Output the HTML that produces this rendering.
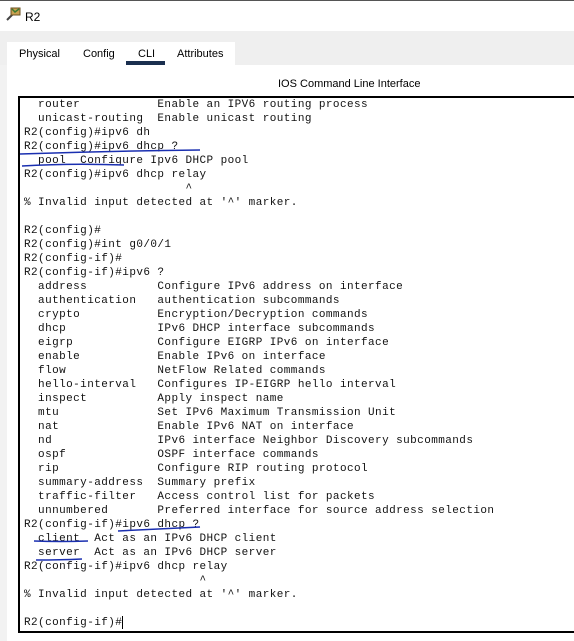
<!DOCTYPE html>
<html><head><style>
body{margin:0;width:574px;height:641px;overflow:hidden;background:#fff;font-family:"Liberation Sans",Arial,sans-serif;position:relative}
.abs{position:absolute}
pre{margin:0;font-family:"Liberation Mono","Courier New",monospace;font-size:11px;line-height:14px;color:#111;letter-spacing:0.42px}
</style></head><body>
<div class="abs" style="left:0;top:0;width:574px;height:1px;background:#555"></div>
<svg class="abs" style="left:4px;top:6px" width="18" height="18" viewBox="0 0 18 18">
<path d="M3 14 L9 8" stroke="#444" stroke-width="2"/>
<rect x="7" y="2" width="9" height="7" fill="#c8a050" stroke="#6a5020" stroke-width="1"/>
<path d="M8 3 L11 6 L15 3" stroke="#3a7a30" stroke-width="1.5" fill="none"/>
</svg>
<div class="abs" style="left:25px;top:10px;font-size:12px;color:#000">R2</div>
<div class="abs" style="left:0;top:31px;width:574px;height:34px;background:#efefef"></div>
<div class="abs" style="left:0;top:65px;width:7px;height:576px;background:#f2f2f2"></div>
<div class="abs" style="left:7px;top:42px;width:228px;height:24px;background:#fff"></div>
<div class="abs" style="left:19px;top:48px;font-size:11px">Physical</div>
<div class="abs" style="left:83px;top:48px;font-size:11px">Config</div>
<div class="abs" style="left:138px;top:48px;font-size:11px">CLI</div>
<div class="abs" style="left:177px;top:48px;font-size:11px">Attributes</div>
<div class="abs" style="left:126px;top:61px;width:39px;height:4px;background:#1a2f4f"></div>
<div class="abs" style="left:278px;top:78px;font-size:11px">IOS Command Line Interface</div>
<div class="abs" style="left:18px;top:96px;height:537px;border:2px solid #000;border-right:none;box-sizing:border-box;width:560px"></div>
<pre class="abs" style="left:24px;top:98px">  router           Enable an IPV6 routing process
  unicast-routing  Enable unicast routing
R2(config)#ipv6 dh
R2(config)#ipv6 dhcp ?
  pool  Configure Ipv6 DHCP pool
R2(config)#ipv6 dhcp relay
                       ^
% Invalid input detected at '^' marker.

R2(config)#
R2(config)#int g0/0/1
R2(config-if)#
R2(config-if)#ipv6 ?
  address          Configure IPv6 address on interface
  authentication   authentication subcommands
  crypto           Encryption/Decryption commands
  dhcp             IPv6 DHCP interface subcommands
  eigrp            Configure EIGRP IPv6 on interface
  enable           Enable IPv6 on interface
  flow             NetFlow Related commands
  hello-interval   Configures IP-EIGRP hello interval
  inspect          Apply inspect name
  mtu              Set IPv6 Maximum Transmission Unit
  nat              Enable IPv6 NAT on interface
  nd               IPv6 interface Neighbor Discovery subcommands
  ospf             OSPF interface commands
  rip              Configure RIP routing protocol
  summary-address  Summary prefix
  traffic-filter   Access control list for packets
  unnumbered       Preferred interface for source address selection
R2(config-if)#ipv6 dhcp ?
  client  Act as an IPv6 DHCP client
  server  Act as an IPv6 DHCP server
R2(config-if)#ipv6 dhcp relay
                         ^
% Invalid input detected at '^' marker.

R2(config-if)#</pre>
<div class="abs" style="left:122px;top:616px;width:1px;height:13px;background:#000"></div>
<svg class="abs" style="left:0;top:0" width="574" height="641">
<g stroke="#1a2fb0" stroke-width="1.5" fill="none">
<path d="M20 154 Q110 151 200 150"/>
<path d="M22 166 Q70 163 124 165"/>
<path d="M118 531 Q160 529 200 527"/>
<path d="M34 541 Q60 542 88 541"/>
<path d="M36 560 Q60 560 82 559"/>
</g>
</svg>
</body></html>
